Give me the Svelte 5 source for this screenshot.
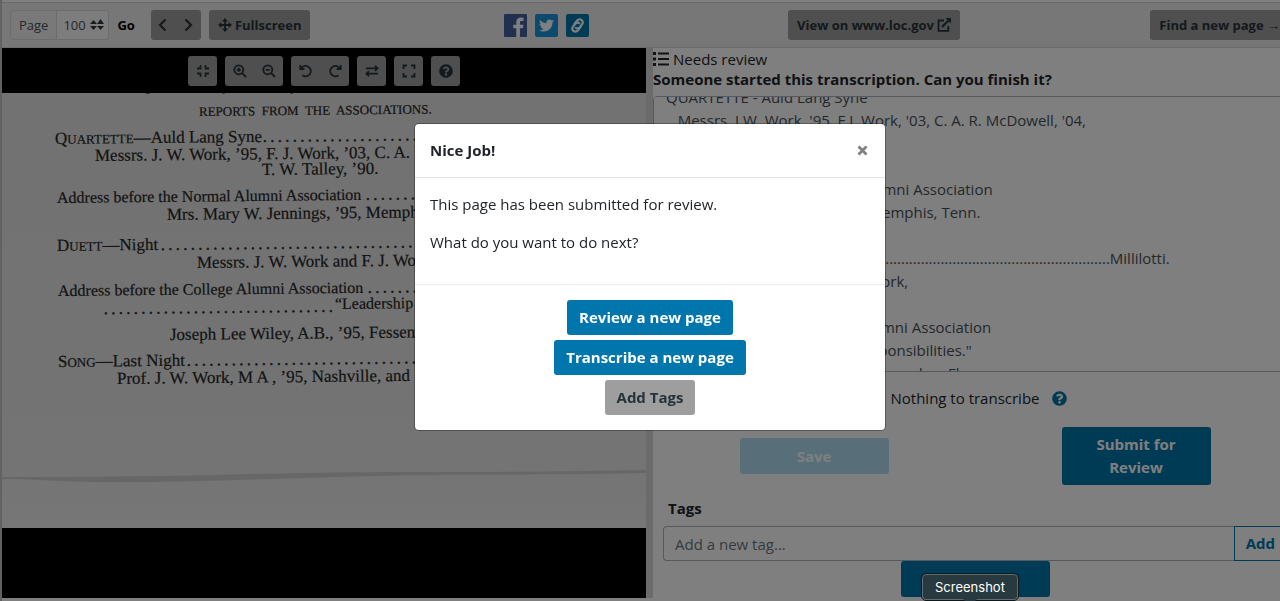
<script>
  import { onMount } from 'svelte';

  const questionPath =
    'M504 256c0 136.997-111.043 248-248 248S8 392.997 8 256C8 119.083 119.043 8 256 8s248 111.083 248 248zM262.655 90c-54.497 0-89.255 22.957-116.549 63.758-3.536 5.286-2.353 12.415 2.715 16.258l34.699 26.31c5.205 3.947 12.621 3.008 16.665-2.122 17.864-22.658 30.113-35.797 57.303-35.797 20.429 0 45.698 13.148 45.698 32.958 0 14.976-12.363 22.667-32.534 33.976C247.128 238.528 216 254.941 216 296v4c0 6.627 5.373 12 12 12h56c6.627 0 12-5.373 12-12v-1.333c0-28.462 83.186-29.647 83.186-106.667 0-58.002-60.165-102-116.531-102zM256 338c-25.365 0-46 20.635-46 46 0 25.364 20.635 46 46 46s46-20.636 46-46c0-25.365-20.635-46-46-46z';

  const twitterPath =
    'M459.37 151.716c.325 4.548.325 9.097.325 13.645 0 138.72-105.583 298.558-298.558 298.558-59.452 0-114.68-17.219-161.137-47.106 8.447.974 16.568 1.299 25.34 1.299 49.055 0 94.213-16.568 130.274-44.832-46.132-.975-84.792-31.188-98.112-72.772 6.498.974 12.995 1.624 19.818 1.624 9.421 0 18.843-1.3 27.614-3.573-48.081-9.747-84.143-51.98-84.143-102.985v-1.299c13.969 7.797 30.214 12.67 47.431 13.319-28.264-18.843-46.781-51.005-46.781-87.391 0-19.492 5.197-37.36 14.294-52.954 51.655 63.675 129.3 105.258 216.365 109.807-1.624-7.797-2.599-15.918-2.599-24.04 0-57.828 46.782-104.934 104.934-104.934 30.213 0 57.502 12.67 76.67 33.137 23.715-4.548 46.456-13.32 66.599-25.34-7.798 24.366-24.366 44.833-46.132 57.827 21.117-2.273 41.584-8.122 60.426-16.243-14.292 20.791-32.161 39.308-52.628 54.253z';

  // Stroked icons, drawn on a 14x14 grid
  const strokes = {
    compress: 'M4.500 1v3.500H1M9.500 1v3.500H13M4.500 13V9.500H1M9.500 13V9.500H13',
    zoomIn: 'M10.3 5.8a4.5 4.5 0 1 1-9 0a4.5 4.5 0 0 1 9 0zM9.2 9.2L13 13M5.8 3.8v4M3.8 5.8h4',
    zoomOut: 'M10.3 5.8a4.5 4.5 0 1 1-9 0a4.5 4.5 0 0 1 9 0zM9.2 9.2L13 13M3.8 5.8h4',
    undo: 'M1.3 1v4.2h4.2M2 4.8A5.2 5.2 0 1 1 3.4 11.2',
    redo: 'M12.7 1v4.2H8.5M12 4.8A5.2 5.2 0 1 0 10.6 11.2',
    flip: 'M1 4.3h11M10 1.8l2.6 2.5L10 6.8M13 9.7H2M4 7.2L1.4 9.7L4 12.2',
    expand: 'M1.5 5V1.5H5M9 1.5h3.5V5M12.5 9v3.5H9M5 12.5H1.5V9'
  };

  const viewerGroups = [
    [{ name: 'Reset view', icon: 'compress' }],
    [{ name: 'Zoom in', icon: 'zoomIn' }, { name: 'Zoom out', icon: 'zoomOut' }],
    [{ name: 'Rotate left', icon: 'undo' }, { name: 'Rotate right', icon: 'redo' }],
    [{ name: 'Flip', icon: 'flip' }],
    [{ name: 'Full page', icon: 'expand' }],
    [{ name: 'Help', icon: 'help' }]
  ];

  const dots = (n) => Array(n).fill('.').join(' ');

  // Printed lines of the scanned page: x, baseline, text, size
  const scanLines = [
    { x: 199, y: 116, text: 'REPORTS  FROM  THE  ASSOCIATIONS.', size: 'small' },
    { x: 55, y: 144, cap: 'Q', caps: 'UARTETTE', text: '—Auld Lang Syne', dotsX: 263, dots: 22 },
    { x: 95, y: 161, text: 'Messrs. J. W. Work, ’95, F. J. Work, ’03, C. A. R.' },
    { x: 262, y: 175, text: 'T. W. Talley, ’90.' },
    { x: 57, y: 203, text: 'Address before the Normal Alumni Association', size: 'tight', dotsX: 366, dots: 8 },
    { x: 167, y: 220, text: 'Mrs. Mary W. Jennings, ’95, Memphis' },
    { x: 57, y: 251, cap: 'D', caps: 'UETT', text: '—Night', dotsX: 161, dots: 36 },
    { x: 197, y: 268, text: 'Messrs. J. W. Work and F. J. Work' },
    { x: 58, y: 296, text: 'Address before the College Alumni Association', size: 'tight', dotsX: 368, dots: 8 },
    { x: 335, y: 309, text: '“Leadership', size: 'tight' },
    { x: 104, y: 314, text: '', dotsX: 104, dots: 31 },
    { x: 170, y: 340, text: 'Joseph Lee Wiley, A.B., ’95, Fessenden' },
    { x: 58, y: 367, cap: 'S', caps: 'ONG', text: '—Last Night', dotsX: 187, dots: 33 },
    { x: 117, y: 384, text: 'Prof. J. W. Work, M A , ’95, Nashville, and' }
  ];

  let transcription = `REPORTS FROM THE ASSOCIATIONS.

QUARTETTE - Auld Lang Syne
   Messrs. J.W. Work, '95, F.J. Work, '03, C. A. R. McDowell, '04,
   T. W. Talley, '90.

Address before the Normal Alumni Association
   Mrs. Mary W. Jennings, '95, Memphis, Tenn.

DUETT - Night${'.'.repeat(88)}Millilotti.
   Messrs. J. W. Work and F. J. Work,

Address before the College Alumni Association
   "Leadership and Greater Responsibilities."
   Joseph Lee Wiley, A.B., '95, Fessenden, Fla.

SONG - Last Night
   Prof. J. W. Work, M.A., '95, Nashville`;

  let pageNumber = '100';
  let newTag = '';
  let nothing = false;
  let open = true;
  let editor;

  onMount(() => {
    editor.scrollTop = 63;
  });
</script>

<div class="page">
  <header class="toolbar">
    <div class="controls">
      <div class="page-select">
        <label for="page-number">Page</label>
        <div class="select-wrap">
          <select id="page-number" bind:value={pageNumber}>
            <option>99</option>
            <option>100</option>
            <option>101</option>
          </select>
          <svg class="sort" viewBox="0 0 14 12" aria-hidden="true">
            <path d="M0 5L3.5 1L7 5zM7 5L10.5 0L14 5zM0 7h7L3.5 11zM7 7h7L10.5 11z" fill="currentColor" />
          </svg>
        </div>
        <button class="go">Go</button>
      </div>
      <div class="group nav">
        <button aria-label="Previous page">
          <svg viewBox="0 0 14 14"><path d="M9.500 1.500L4 7l5.500 5.500" class="line" /></svg>
        </button>
        <button aria-label="Next page">
          <svg viewBox="0 0 14 14"><path d="M4.500 1.500L10 7l-5.500 5.500" class="line" /></svg>
        </button>
      </div>
      <button class="btn-sm">
        <svg viewBox="0 0 14 14" aria-hidden="true">
          <path d="M7 2v10M2 7h10" class="line thin" />
          <path d="M7 0l3 3.4H4zM7 14l3-3.4H4zM0 7l3.4-3v6zM14 7l-3.4-3v6z" fill="currentColor" />
        </svg>
        Fullscreen
      </button>
    </div>

    <nav class="social" aria-label="Share">
      <a href="#facebook" aria-label="Facebook">
        <svg viewBox="0 0 23 23">
          <rect width="23" height="23" rx="1" fill="#4460a0" />
          <path d="M12.3 23v-8.700H9.300v-3.500h3V8.200c0-3 1.800-4.600 4.500-4.600c1.300 0 2.300.1 2.700.2V7h-1.900c-1.400 0-1.700.7-1.700 1.700v2.100h3.500l-.5 3.500h-3V23z" fill="#fff" />
        </svg>
      </a>
      <a href="#twitter" aria-label="Twitter">
        <svg viewBox="0 0 23 23">
          <rect width="23" height="23" rx="2" fill="#1b95e0" />
          <svg x="4" y="4" width="15" height="15" viewBox="0 0 512 512"><path d={twitterPath} fill="#fff" /></svg>
        </svg>
      </a>
      <a href="#link" aria-label="Copy link">
        <svg viewBox="0 0 23 23">
          <rect width="23" height="23" rx="2" fill="#0076ad" />
          <g transform="rotate(-50 11.500 11.500)" fill="none" stroke="#fff" stroke-width="2.200" stroke-linecap="round">
            <path d="M12 14.900H7.800a3.100 3.100 0 0 1 0-6.200h3.800a3.100 3.100 0 0 1 2.900 2.600" />
            <path d="M11 8.100H15.200a3.100 3.100 0 0 1 0 6.200h-3.800a3.100 3.100 0 0 1-2.900-2.600" />
          </g>
        </svg>
      </a>
    </nav>

    <a class="btn-sm" href="#loc">
      View on www.loc.gov
      <svg viewBox="0 0 14 14" aria-hidden="true">
        <path d="M7 2.500H1.500v10.300h9.800V8" class="line thin" />
        <path d="M5 9L11.500 2.500" class="line" />
        <path d="M8.500 0H14v5.500z" fill="currentColor" />
      </svg>
    </a>
    <a class="btn-sm" href="#next">Find a new page →</a>
  </header>

  <main>
    <section class="viewer" aria-label="Page image">
      <div class="viewer-bar">
        {#each viewerGroups as group}
          <div class="group">
            {#each group as item}
              <button aria-label={item.name}>
                {#if item.icon === 'help'}
                  <svg viewBox="0 0 512 512"><path d={questionPath} fill="currentColor" /></svg>
                {:else}
                  <svg viewBox="0 0 14 14"><path d={strokes[item.icon]} class="line thin" /></svg>
                {/if}
              </button>
            {/each}
          </div>
        {/each}
      </div>
      <svg class="scan" viewBox="2 93 644 435">
        <defs>
          <linearGradient id="paper" x1="0" y1="0" x2="0" y2="1">
            <stop offset="0" stop-color="#e4e4e4" />
            <stop offset="0.85" stop-color="#e8e8e8" />
            <stop offset="1" stop-color="#eeeeee" />
          </linearGradient>
        </defs>
        <rect x="2" y="93" width="644" height="435" fill="url(#paper)" />
        <path d="M145 93l3 1l2-1zM222 93l2 1l1-1zM290 93l2 1l1-1z" fill="#333" />
        <path d="M2 477C60 477 90 477 140 476C230 475 300 472 420 472C520 472 580 471 646 470V473C560 475 500 474 420 475C300 477 200 483 100 482C60 482 40 479 2 479z" fill="#cfcfcf" />
        {#each scanLines as line}
          <text x={line.x} y={line.y} class={line.size} transform="rotate(-0.6 {line.x} {line.y})">
            {#if line.cap}{line.cap}<tspan class="small">{line.caps}</tspan>{/if}{line.text}{#if line.dots}<tspan class="dots" x={line.dotsX}>{dots(line.dots)}</tspan>{/if}
          </text>
        {/each}
      </svg>
    </section>

    <div class="gutter"></div>

    <section class="work">
      <div class="status">
        <svg viewBox="0 0 16 14" aria-hidden="true">
          <path d="M0 0h3v3H0zM0 5.500h3v3H0zM0 11h3v3H0zM5 .5h11v2H5zM5 6h11v2H5zM5 11.500h11v2H5z" fill="currentColor" />
        </svg>
        Needs review
      </div>
      <h1>Someone started this transcription. Can you finish it?</h1>
      <textarea aria-label="Transcription" bind:this={editor} bind:value={transcription}></textarea>

      <div class="nothing">
        <input type="checkbox" id="nothing" bind:checked={nothing} />
        <label for="nothing">Nothing to transcribe</label>
        <button class="help" aria-label="Help">
          <svg viewBox="0 0 512 512"><path d={questionPath} fill="currentColor" /></svg>
        </button>
      </div>

      <div class="actions">
        <button class="btn primary wide" disabled>Save</button>
        <button class="btn primary wide">Submit for Review</button>
      </div>

      <div class="tags">
        <label for="new-tag">Tags</label>
        <div class="tag-row">
          <input id="new-tag" type="text" placeholder="Add a new tag..." bind:value={newTag} />
          <button>Add</button>
        </div>
        <button class="btn primary wide save-tags" aria-label="Save tags"></button>
      </div>
    </section>
  </main>

  {#if open}
    <div class="backdrop">
      <div class="modal" role="dialog" aria-modal="true" aria-labelledby="modal-title">
        <div class="modal-header">
          <h2 id="modal-title">Nice Job!</h2>
          <button class="close" aria-label="Close" on:click={() => (open = false)}>
            <svg viewBox="0 0 11 11"><path d="M1.500 1.500l8 8M9.500 1.500l-8 8" stroke="currentColor" stroke-width="2.800" /></svg>
          </button>
        </div>
        <div class="modal-body">
          <p>This page has been submitted for review.</p>
          <p>What do you want to do next?</p>
        </div>
        <div class="modal-footer">
          <a class="btn primary" href="#review">Review a new page</a>
          <a class="btn primary" href="#transcribe">Transcribe a new page</a>
          <button class="btn secondary">Add Tags</button>
        </div>
      </div>
    </div>
  {/if}
</div>

<div class="dock-tip">Screenshot</div>

<style>
  :global(body) {
    overflow: hidden;
    background: #fff;
    color: #212529;
    font: 15px/23px 'Open Sans', 'Noto Sans', sans-serif;
  }

  :global(*) {
    box-sizing: border-box;
  }

  button,
  input,
  select,
  textarea {
    margin: 0;
    font: inherit;
    color: inherit;
  }

  button {
    padding: 0;
    border: 0;
    background: none;
    cursor: pointer;
  }

  a {
    color: inherit;
    text-decoration: none;
  }

  h1,
  h2,
  p {
    margin: 0;
  }

  .line {
    fill: none;
    stroke: currentColor;
    stroke-width: 2.2;
  }

  .line.thin {
    stroke-width: 1.8;
  }

  /* The layout runs a little wider than the window */
  .page {
    position: relative;
    display: flex;
    flex-direction: column;
    width: calc(100% + 17px);
    min-height: 100vh;
    padding-top: 2px;
    border-left: 2px solid #c4c4c4;
  }

  .toolbar {
    display: flex;
    align-items: center;
    justify-content: space-between;
    padding: 7px 8px 7px 8px;
    border-top: 1px solid #d4d4d4;
    border-bottom: 1px solid #d4d4d4;
    background: #eee;
    font-size: 13px;
    line-height: 20px;
  }

  .controls,
  .page-select {
    display: flex;
    align-items: center;
  }

  .controls {
    gap: 8px;
  }

  .page-select label,
  .select-wrap {
    height: 30px;
    padding: 4px 8px;
    border: 1px solid #d5dbde;
    border-radius: 4px 0 0 4px;
    background: #f3f3f3;
    color: #495057;
  }

  .select-wrap {
    display: flex;
    align-items: center;
    width: 52px;
    padding: 0 4px 0 6px;
    border-left: 0;
    border-radius: 0 4px 4px 0;
    background: #fafafa;
  }

  .select-wrap select {
    flex: 1;
    min-width: 0;
    padding: 0;
    border: 0;
    background: none;
    appearance: none;
  }

  .sort {
    flex: none;
    width: 14px;
    height: 12px;
    color: #33383c;
  }

  .go {
    padding: 4px 8px;
    color: #000;
    font-weight: 700;
  }

  .group {
    display: flex;
    border-radius: 3px;
    background: #9e9e9e;
    color: #263339;
  }

  .group button {
    display: grid;
    place-items: center;
    width: 29px;
    height: 30px;
  }

  .group svg {
    width: 14px;
    height: 14px;
  }

  .nav button {
    width: 25px;
  }

  .btn-sm {
    display: flex;
    align-items: center;
    gap: 3px;
    height: 30px;
    padding: 0 9px;
    border-radius: 3px;
    background: #9e9e9e;
    color: #263339;
    font-weight: 700;
    white-space: nowrap;
  }

  .btn-sm svg {
    width: 14px;
    height: 14px;
  }

  .social {
    display: flex;
    gap: 8px;
    padding: 0 9px 0 3px;
  }

  .social a,
  .social a > svg {
    display: block;
    width: 23px;
    height: 23px;
  }

  main {
    display: grid;
    flex: 1;
    grid-template-columns: minmax(0, 1fr) 7px minmax(0, 1fr);
    padding-bottom: 3px;
  }

  .viewer {
    display: flex;
    flex-direction: column;
    background: #000;
  }

  .viewer-bar {
    display: flex;
    justify-content: center;
    gap: 8px;
    padding: 8px 0 7px;
  }

  .scan {
    display: block;
    width: 100%;
  }

  .scan text {
    fill: #262626;
    font-family: 'Liberation Serif', serif;
    font-size: 17px;
    stroke: #262626;
    stroke-width: 0.2;
    white-space: pre;
  }

  .scan text.tight {
    font-size: 16px;
  }

  .scan text.small,
  .scan .small {
    font-size: 13px;
  }

  .scan .dots {
    font-size: 15px;
    stroke-width: 0.6;
  }

  .gutter {
    background: #d6d6d6;
  }

  .work {
    display: flex;
    flex-direction: column;
    padding-top: 1px;
  }

  .status {
    display: flex;
    align-items: center;
    gap: 4px;
    line-height: 20px;
  }

  .status svg {
    width: 16px;
    height: 14px;
  }

  h1 {
    font-size: 15px;
    line-height: 20px;
  }

  textarea {
    display: block;
    height: 276px;
    margin: 7px 0 0;
    padding: 6px 12px;
    border: 1px solid #aab4bc;
    border-radius: 4px;
    outline: 0;
    background: #fff;
    color: #495057;
    resize: none;
    scrollbar-width: none;
  }

  .nothing {
    display: flex;
    align-items: center;
    justify-content: center;
    gap: 8px;
    padding: 15px 14px 17px 0;
  }

  .nothing input {
    width: 13px;
    height: 13px;
  }

  .help {
    margin-left: 4px;
    color: #0076ad;
  }

  .help svg {
    display: block;
    width: 15px;
    height: 15px;
  }

  .actions {
    display: flex;
    align-items: center;
    justify-content: space-around;
  }

  .btn {
    padding: 6px 12px;
    border-radius: 3px;
    font-weight: 700;
    text-align: center;
  }

  .primary {
    background: #0076ad;
    color: #fff;
  }

  .primary:disabled {
    background: #b0dcf0;
    color: #fff;
    opacity: 1;
  }

  .secondary {
    background: #9e9e9e;
    color: #263339;
  }

  .wide {
    width: 149px;
    min-height: 36px;
  }

  .tags {
    display: flex;
    flex-direction: column;
    padding: 12px 10px 0;
  }

  .tags label {
    padding: 0 5px 6px;
    font-weight: 700;
  }

  .tag-row {
    display: flex;
  }

  .tag-row input {
    flex: 1;
    min-width: 0;
    height: 35px;
    padding: 0 11px;
    border: 1px solid #aab4bc;
    border-right: 0;
    border-radius: 4px 0 0 4px;
    background: #fff;
  }

  .tag-row input::placeholder {
    color: #6c757d;
    opacity: 1;
  }

  .tag-row button {
    padding: 0 11px;
    border: 1px solid #0076ad;
    color: #0076ad;
    font-weight: 700;
  }

  .save-tags {
    align-self: center;
  }

  .backdrop {
    position: absolute;
    inset: 0 0 0 -2px;
    display: flex;
    align-items: flex-start;
    justify-content: center;
    padding: 124px 0 0 3px;
    background: rgba(0, 0, 0, 0.5);
  }

  .modal {
    width: 470px;
    border-radius: 4px;
    background: #fff;
    box-shadow: 0 0 0 1px rgba(0, 0, 0, 0.3);
  }

  .modal-header {
    display: flex;
    align-items: center;
    justify-content: space-between;
    padding: 15px;
    border-bottom: 1px solid #dee2e6;
  }

  .modal-header h2 {
    font-size: 15px;
    line-height: 23px;
  }

  .close {
    padding: 2px;
    color: #808080;
  }

  .close svg {
    display: block;
    width: 11px;
    height: 11px;
  }

  .modal-body {
    padding: 15px;
  }

  .modal-body p {
    margin-bottom: 15px;
  }

  .modal-footer {
    display: flex;
    flex-direction: column;
    align-items: center;
    gap: 5px;
    padding: 15px;
    border-top: 1px solid #e9ecef;
  }

  .dock-tip {
    position: fixed;
    bottom: 1px;
    left: 922px;
    padding: 2px 12px;
    border: 1px solid #5f6e73;
    border-radius: 4px;
    outline: 1px solid #10181b;
    background: #28393f;
    color: #fff;
    font: 13px/20px Inter, 'Liberation Sans', sans-serif;
  }

  .dock-tip::after {
    content: '';
    position: absolute;
    top: 100%;
    left: 50%;
    border: 7px solid transparent;
    border-top-color: #28393f;
    transform: translateX(-50%);
  }
</style>
